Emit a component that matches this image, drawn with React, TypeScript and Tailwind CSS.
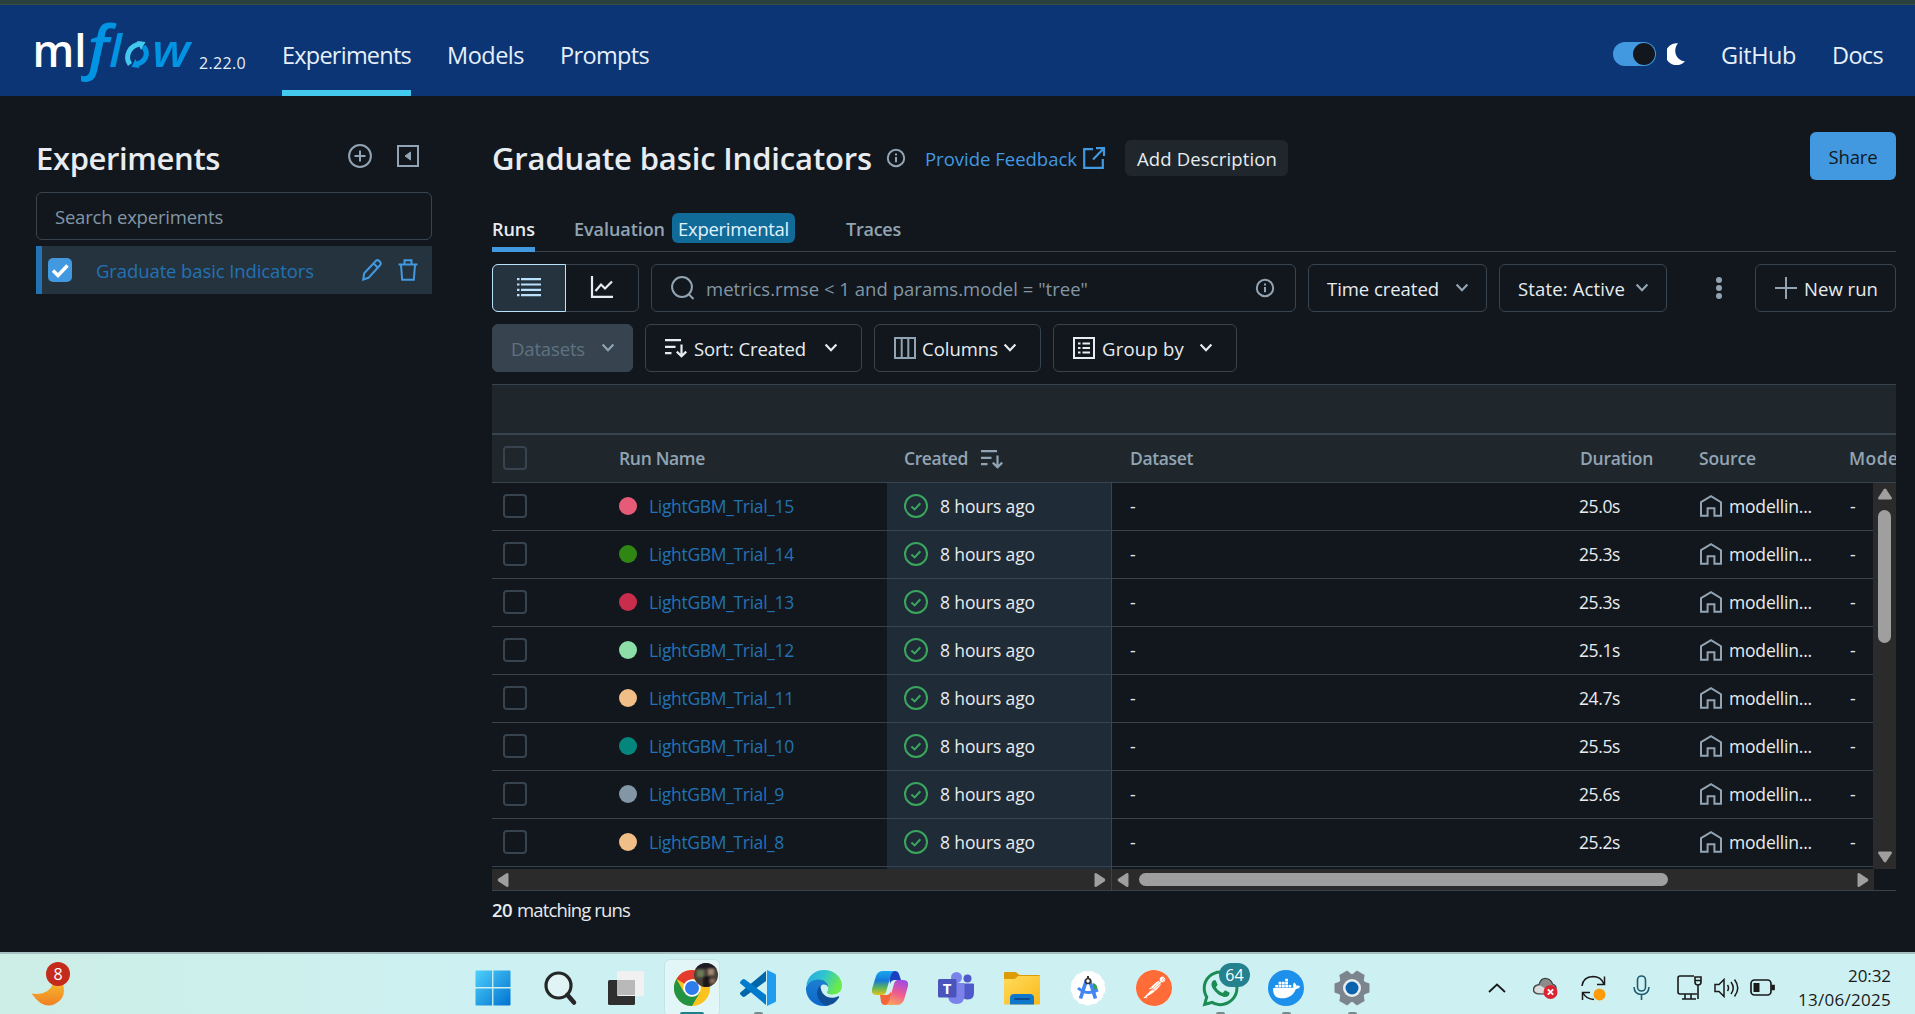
import { useLayoutEffect, useRef, useState } from "react";
import type { ReactNode } from "react";
import { SiDocker, SiPostman } from "react-icons/si";
import { FaWhatsapp } from "react-icons/fa";

/** Single line of text whose letter spacing is adjusted so it fills its slot. */
function Fit({ w, children, className = "" }: { w: number; children: string; className?: string }) {
  const ref = useRef<HTMLSpanElement>(null);
  const [spacing, setSpacing] = useState(0);
  useLayoutEffect(() => {
    const el = ref.current;
    if (!el) return;
    el.style.letterSpacing = "0px";
    const natural = el.getBoundingClientRect().width;
    const next = (w - natural) / children.length;
    el.style.letterSpacing = `${next}px`;
    setSpacing(next);
  }, [w, children]);
  return (
    <span ref={ref} className={`inline-block shrink-0 whitespace-nowrap ${className}`} style={{ letterSpacing: spacing }}>
      {children}
    </span>
  );
}

function Chevron({ className = "" }: { className?: string }) {
  return (
    <svg viewBox="0 0 14 10" className={`h-[10px] w-[14px] shrink-0 ${className}`} fill="none" stroke="currentColor" strokeWidth="2.2">
      <path d="M1.6 1.6 7 7.2l5.4-5.6" />
    </svg>
  );
}

function InfoIcon({ className = "" }: { className?: string }) {
  return (
    <svg viewBox="0 0 20 20" className={`size-5 shrink-0 text-[#92a4b3] ${className}`} fill="none" stroke="currentColor" strokeWidth="2">
      <circle cx="10" cy="10" r="8.2" />
      <path d="M10 9v5.2M10 5.4v2" />
    </svg>
  );
}

function SortIcon({ className = "" }: { className?: string }) {
  return (
    <svg viewBox="0 0 24 20" className={`h-5 w-6 shrink-0 ${className}`} fill="none" stroke="currentColor" strokeWidth="2.2">
      <path d="M1 2.2h16M1 8.8h10.5M1 15.2h6.5M17.5 6.5v12M12.8 13.6l4.7 4.7 4.7-4.7" />
    </svg>
  );
}

function HouseIcon() {
  return (
    <svg viewBox="0 0 22 22" className="size-[22px] shrink-0 text-[#92a4b3]" fill="none" stroke="currentColor" strokeWidth="2">
      <path d="M1 7.2 11 1.2l10 6v13.6h-6.6v-7.6H7.6v7.6H1Z" />
    </svg>
  );
}

function CheckCircle() {
  return (
    <svg viewBox="0 0 24 24" className="size-6 shrink-0 text-[#3ba65e]" fill="none" stroke="currentColor" strokeWidth="2">
      <circle cx="12" cy="12" r="11" />
      <path d="m7.4 12.4 3.2 3 5.8-6.2" />
    </svg>
  );
}

function Button({ className = "", children }: { className?: string; children: ReactNode }) {
  return (
    <button className={`flex h-12 shrink-0 items-center rounded-[6px] border border-[#37444f] text-[18.5px] text-[#e8ecf0] ${className}`}>
      {children}
    </button>
  );
}

function Logo() {
  return (
    <svg viewBox="-36 -16 200 91" className="-ml-9 h-[91px] w-[200px] shrink-0" fontFamily="'Open Sans', sans-serif">
      <text x="-3.5" y="52" fontSize="46" fontWeight="600" fill="#fff" textLength="54" lengthAdjust="spacingAndGlyphs">ml</text>
      <text x="45.500" y="52" fontSize="62" fontWeight="600" fontStyle="italic" fill="#0194e2" textLength="35" lengthAdjust="spacingAndGlyphs">ƒ</text>
      <text x="73" y="52" fontSize="46" fontWeight="600" fontStyle="italic" fill="#0194e2" textLength="13" lengthAdjust="spacingAndGlyphs">l</text>
      <g fill="none" strokeWidth="5">
        <path d="M94 49.5c-6-8 0-20 11-20.500" stroke="#43c9ed" />
        <path d="M107.500 31.500c6 7 2 16-8 18" stroke="#0194e2" />
      </g>
      <path d="m101 26 8.500 1-4.500 8Z" fill="#43c9ed" />
      <path d="m103.500 53-8-1 4-8Z" fill="#0194e2" />
      <text x="116" y="52" fontSize="46" fontWeight="600" fontStyle="italic" fill="#0194e2" textLength="38" lengthAdjust="spacingAndGlyphs">w</text>
    </svg>
  );
}

function Header() {
  return (
    <header className="flex h-[91px] items-start bg-[#0b3574] pl-9 text-[#e6effa]">
      <div className="-mt-[6px] h-[97px]"><Logo /></div>
      <div className="w-[46px] pt-[46px] -ml-px text-base leading-[24px]"><Fit w={47}>2.22.0</Fit></div>
      <nav className="ml-[37px] flex h-full gap-[36px] text-[23.5px] leading-[100px]">
        <div className="h-full border-b-[6px] border-[#43c9ed]"><Fit w={129} className="h-[85px]">Experiments</Fit></div>
        <Fit w={77} className="h-[85px]">Models</Fit>
        <Fit w={89} className="h-[85px]">Prompts</Fit>
      </nav>
      <div className="ml-auto flex items-center pr-8 text-[23.5px] leading-[100px]">
        <div className="-mt-[3px] flex h-6 w-[43px] items-center justify-end rounded-full bg-[#4299e0] pr-[1px]">
          <div className="size-[22px] rounded-full bg-[#11171d]" />
        </div>
        <svg viewBox="0 0 18 22" className="-mt-[2px] mr-[36px] ml-[11px] h-[22px] w-[18px]" fill="#fff">
          <path d="M11 .3A11 11 0 1 0 18 18.200C10.500 18.500 4.500 8.500 11 .3Z" />
        </svg>
        <Fit w={75} className="mr-9">GitHub</Fit>
        <Fit w={51}>Docs</Fit>
      </div>
    </header>
  );
}

function Sidebar() {
  return (
    <aside className="ml-9 w-[396px] shrink-0 pt-9">
      <div className="flex h-12 items-center text-[#92a4b3]">
        <Fit w={184} className="mt-[5px] text-[31px] font-semibold text-[#e8ecf0]">Experiments</Fit>
        <svg viewBox="0 0 24 24" className="ml-32 size-6" fill="none" stroke="currentColor" strokeWidth="2">
          <circle cx="12" cy="12" r="10.900" />
          <path d="M12 6.500v11M6.500 12h11" />
        </svg>
        <svg viewBox="0 0 22 22" className="ml-[25px] size-[22px]" fill="none" stroke="currentColor" strokeWidth="2">
          <path d="M1 1h20v20H1Z" />
          <path d="m8 11 5.500-4v8Z" fill="currentColor" strokeWidth="1" />
        </svg>
      </div>
      <div className="mt-3 flex h-12 items-center rounded-[6px] border border-[#37444f] pt-[2px] pl-[18px] text-[18.5px] text-[#8396a5]">
        <Fit w={168}>Search experiments</Fit>
      </div>
      <div className="mt-[6px] flex h-12 items-center border-l-[6px] border-[#2272b4] bg-[#25333f] pl-[6px] text-[#4299e0]">
        <svg viewBox="0 0 24 24" className="size-6" fill="none">
          <rect width="24" height="24" rx="5" fill="#4299e0" />
          <path d="m5 12.500 5 5 9.500-10" stroke="#fff" strokeWidth="3.500" />
        </svg>
        <Fit w={218} className="mt-[2px] ml-6 text-[18.5px] text-[#2272b4]">Graduate basic Indicators</Fit>
        <svg viewBox="0 0 20 22" className="ml-12 h-[22px] w-5" fill="none" stroke="currentColor" strokeWidth="2">
          <path d="m1.200 20.500 1-6.300L14 1.800q1.500-1.300 3 0l1.200 1.200q1.200 1.500 0 3L6.500 18.800ZM11.800 4.500l4 4.200" />
        </svg>
        <svg viewBox="0 0 20 22" className="ml-4 h-[22px] w-5" fill="none" stroke="currentColor" strokeWidth="2">
          <path d="M.5 5.500h19M6.500 5V1.200h7V5M3 6l1.200 14.800h11.600L17 6" />
        </svg>
      </div>
    </aside>
  );
}

function TitleRow() {
  return (
    <div className="flex h-12 items-center">
      <Fit w={380} className="mt-[5px] text-[31px] font-semibold text-[#e8ecf0]">Graduate basic Indicators</Fit>
      <InfoIcon className="mt-[3px] ml-[14px]" />
      <Fit w={152} className="mt-[6px] ml-[19px] text-[18.5px] text-[#4299e0]">Provide Feedback</Fit>
      <svg viewBox="0 0 24 24" className="mt-[4px] ml-[5px] size-6 text-[#4299e0]" fill="none" stroke="currentColor" strokeWidth="2.200">
        <path d="M11 3.200H2.200v18.600h18.600V13M14 2.200h8V10M22 2.200 11 13.500" />
      </svg>
      <button className="mt-[4px] ml-[19px] flex h-9 w-[163px] items-center rounded-[6px] bg-[#1f272d] pt-[2px] pl-3 text-[18.5px] text-[#e8ecf0]">
        <Fit w={140}>Add Description</Fit>
      </button>
      <button className="ml-auto flex h-12 w-[86px] items-center justify-center rounded-[6px] bg-[#4299e0] pt-px text-[18.5px] text-[#11171d]">
        <Fit w={49}>Share</Fit>
      </button>
    </div>
  );
}

function Tabs() {
  return (
    <div className="mt-[28px] flex h-11 border-b border-[#37444f] text-[18px] leading-[42px] font-semibold text-[#92a4b3]">
      <div className="h-11 border-b-[5px] border-[#4299e0] text-[#e8ecf0]"><Fit w={43} className="h-[38px]">Runs</Fit></div>
      <Fit w={91} className="ml-[39px]">Evaluation</Fit>
      <div className="mt-[5px] ml-[7px] h-[30px] w-[123px] rounded-[6px] bg-[#106b98] pl-[6px] text-[18.500px] leading-[31px] font-normal text-[#e0f2fd]">
        <Fit w={111}>Experimental</Fit>
      </div>
      <Fit w={55} className="ml-[51px]">Traces</Fit>
    </div>
  );
}

function Toolbar() {
  return (
    <>
      <div className="mt-3 flex">
        <div className="flex h-12 w-[147px] rounded-[6px] border border-[#37444f]">
          <div className="-my-px -ml-px flex w-[74px] items-center justify-center rounded-l-[6px] border border-[#bae1fc] bg-[#25333f] text-[#bae1fc]">
            <svg viewBox="0 0 24 20" className="-mt-[3px] h-5 w-6" fill="none" stroke="currentColor" strokeWidth="2.200">
              <path d="M0 2.200h2.500M4 2.200h20M0 7.500h2.500M4 7.500h20M0 12.800h2.500M4 12.800h20M0 18.100h2.500M4 18.100h20" />
            </svg>
          </div>
          <div className="flex flex-1 items-center justify-center text-[#e8ecf0]">
            <svg viewBox="0 0 24 24" className="-mt-[3px] mr-px size-6" fill="none" stroke="currentColor" strokeWidth="2.200">
              <path d="M2 1v20.800h21M5.500 16l5.500-6.500 4 4L22 6.500" />
            </svg>
          </div>
        </div>
        <div className="ml-3 flex h-12 w-[645px] items-center rounded-[6px] border border-[#37444f] pl-[19px] text-[18.5px] text-[#8396a5]">
          <svg viewBox="0 0 24 24" className="size-6 text-[#92a4b3]" fill="none" stroke="currentColor" strokeWidth="2">
            <circle cx="11" cy="11" r="9.900" />
            <path d="m17.500 18 5 5" />
          </svg>
          <Fit w={382} className="mt-[2px] ml-[11px]">{'metrics.rmse < 1 and params.model = "tree"'}</Fit>
          <InfoIcon className="ml-[167px]" />
        </div>
        <Button className="ml-3 w-[179px] pl-[18px]">
          <Fit w={112} className="mt-[2px]">Time created</Fit>
          <Chevron className="ml-4 text-[#92a4b3]" />
        </Button>
        <Button className="ml-3 w-[168px] pl-[18px]">
          <Fit w={107} className="mt-[2px]">State: Active</Fit>
          <Chevron className="ml-[10px] text-[#92a4b3]" />
        </Button>
        <svg viewBox="0 0 6 22" className="mt-[13px] ml-[49px] h-[22px] w-[6px]" fill="#92a4b3">
          <circle cx="3" cy="3" r="3" /><circle cx="3" cy="11" r="3" /><circle cx="3" cy="19" r="3" />
        </svg>
        <Button className="ml-auto w-[141px] pl-[19px]">
          <svg viewBox="0 0 22 22" className="mr-[7px] size-[22px] shrink-0" stroke="#92a4b3" strokeWidth="2"><path d="M11 0v22M0 11h22" /></svg>
          <Fit w={74} className="mt-[2px]">New run</Fit>
        </Button>
      </div>
      <div className="mt-3 flex gap-3">
        <Button className="w-[141px] bg-[#37444f] pl-[18px]">
          <Fit w={74} className="mt-[2px] text-[#5f7281]">Datasets</Fit>
          <Chevron className="ml-4 text-[#92a4b3]" />
        </Button>
        <Button className="w-[217px] pl-[18px]">
          <SortIcon />
          <Fit w={112} className="mt-[2px] ml-[6px]">Sort: Created</Fit>
          <Chevron className="ml-[18px]" />
        </Button>
        <Button className="w-[167px] pl-[19px]">
          <svg viewBox="0 0 22 22" className="mr-[6px] size-[22px] shrink-0" fill="none" stroke="#92a4b3" strokeWidth="2">
            <path d="M1 1h20v20H1ZM7.700 1v20M14.300 1v20" />
          </svg>
          <Fit w={76} className="mt-[2px]">Columns</Fit>
          <Chevron className="ml-[5px]" />
        </Button>
        <Button className="w-[184px] pl-[19px]">
          <svg viewBox="0 0 22 22" className="mr-[7px] size-[22px] shrink-0" fill="none" stroke="currentColor" strokeWidth="2">
            <path d="M1 1h20v20H1ZM5 6.500h2.500M9.500 6.500H17M5 11h2.500M9.500 11H17M5 15.500h2.500M9.500 15.500H17" />
          </svg>
          <Fit w={82} className="mt-[2px]">Group by</Fit>
          <Chevron className="ml-[15px]" />
        </Button>
      </div>
    </>
  );
}

const runs = [
  { name: "LightGBM_Trial_15", w: 145, dot: "bg-[#e65b77]", duration: "25.0s" },
  { name: "LightGBM_Trial_14", w: 145, dot: "bg-[#308613]", duration: "25.3s" },
  { name: "LightGBM_Trial_13", w: 145, dot: "bg-[#c82d4c]", duration: "25.3s" },
  { name: "LightGBM_Trial_12", w: 145, dot: "bg-[#8ddda8]", duration: "25.1s" },
  { name: "LightGBM_Trial_11", w: 145, dot: "bg-[#f2be88]", duration: "24.7s" },
  { name: "LightGBM_Trial_10", w: 145, dot: "bg-[#04867d]", duration: "25.5s" },
  { name: "LightGBM_Trial_9", w: 135, dot: "bg-[#8396a5]", duration: "25.6s" },
  { name: "LightGBM_Trial_8", w: 135, dot: "bg-[#f2be88]", duration: "25.2s" },
];

function Arrow({ className }: { className: string }) {
  return (
    <svg viewBox="0 0 12 16" className={`h-4 w-3 shrink-0 ${className}`} fill="#9f9f9f">
      <path d="M11.500 2v12q-.5 1.500-2 .7L1.200 9.200Q0 8 1.200 6.800L9.500 1.300q1.500-.8 2 .7Z" />
    </svg>
  );
}

function RunsTable() {
  const cell = "flex items-center";
  return (
    <section className="mt-3 border-y border-[#37444f] text-[17.500px]">
      <div className="h-12 bg-[#1f272d]" />
      <div className="flex h-[50px] overflow-hidden border-t-2 border-b border-[#37444f] bg-[#1f272d] font-semibold text-[#92a4b3]">
        <div className={`${cell} w-[127px] pb-px pl-[11px]`}><div className="size-6 rounded-[4px] border-2 border-[#37444f]" /></div>
        <div className={`${cell} w-[285px]`}><Fit w={86}>Run Name</Fit></div>
        <div className={`${cell} w-[226px]`}><Fit w={64}>Created</Fit><SortIcon className="ml-[12px]" /></div>
        <div className={`${cell} w-[450px]`}><Fit w={63}>Dataset</Fit></div>
        <div className={`${cell} w-[119px]`}><Fit w={73}>Duration</Fit></div>
        <div className={`${cell} w-[150px]`}><Fit w={57}>Source</Fit></div>
        <div className={`${cell} w-[47px] overflow-hidden`}><Fit w={64}>Models</Fit></div>
      </div>
      <div className="flex h-[386px]">
        <div className="w-[1381px]">
          {runs.map((r) => (
            <div key={r.name} className="flex h-12 text-[#e8ecf0]">
              <div className={`${cell} w-[395px] border-b border-[#37444f] pb-px pl-[11px]`}>
                <div className="size-6 rounded-[4px] border-2 border-[#37444f]" />
                <div className={`ml-[92px] size-[18px] rounded-full ${r.dot}`} />
                <Fit w={r.w} className="ml-3 text-[#2272b4]">{r.name}</Fit>
              </div>
              <div className={`${cell} w-[225px] border-r border-b border-[#37444f] bg-[#1f2b36] pb-px pl-[17px]`}>
                <CheckCircle />
                <Fit w={95} className="ml-3">8 hours ago</Fit>
              </div>
              <div className={`${cell} w-[761px] border-b border-[#37444f] pb-px pl-[18px]`}>
                <span className="w-[449px]">-</span>
                <Fit w={41} className="mr-20">{r.duration}</Fit>
                <HouseIcon />
                <Fit w={83} className="mr-[38px] ml-[7px]">modellin...</Fit>
                <span>-</span>
              </div>
            </div>
          ))}
          <div className="ml-[395px] h-[2px] w-[225px] border-r border-[#37444f] bg-[#1f2b36]" />
        </div>
        <div className="flex w-[23px] flex-col items-center bg-[#2b2b2b] py-[3px] pb-1">
          <Arrow className="rotate-90" />
          <div className="mt-2 h-[133px] w-[13px] rounded-full bg-[#9f9f9f]" />
          <Arrow className="mt-auto -rotate-90" />
        </div>
      </div>
      <div className="flex h-[21px]">
        <div className="flex w-[620px] items-center justify-between border-r border-[#37444f] bg-[#2b2b2b] pr-[5px] pl-[5px]">
          <Arrow className="" />
          <Arrow className="rotate-180" />
        </div>
        <div className="flex w-[762px] items-center bg-[#2b2b2b] pr-[5px] pl-[5px]">
          <Arrow className="" />
          <div className="ml-[10px] h-[13px] w-[529px] rounded-full bg-[#9f9f9f]" />
          <Arrow className="ml-auto rotate-180" />
        </div>
      </div>
    </section>
  );
}

function WindowsIcon() {
  return (
    <svg viewBox="0 0 36 36" className="size-9">
      <defs><linearGradient id="win" x1="0" y1="0" x2="1" y2="1"><stop stopColor="#4fd0fb" /><stop offset="1" stopColor="#0072d0" /></linearGradient></defs>
      <path fill="url(#win)" d="M.5 1.500q0-1 1-1h15.600v16.600H.5ZM18.400.5H34.500q1 0 1 1v15.600H18.400ZM.5 18.400h16.600v17.100H1.500q-1 0-1-1ZM18.400 18.400h17.100v16.100q0 1-1 1H18.400Z" />
    </svg>
  );
}

function SearchIcon() {
  return (
    <svg viewBox="0 0 36 36" className="size-9" fill="none" stroke="#262626">
      <circle cx="16.500" cy="15.500" r="12.500" strokeWidth="3.200" fill="#e0f4f6" />
      <path d="m25.500 25 6.500 7.500" strokeWidth="4.500" strokeLinecap="round" />
    </svg>
  );
}

function TaskViewIcon() {
  return (
    <svg viewBox="0 0 36 36" className="size-9">
      <rect x="0" y="10" width="27" height="25" rx="1.500" fill="#2f2f2f" />
      <rect x="9" y="1" width="27" height="25" rx="1.500" fill="#f1f1f1" />
      <path d="M9 10h18v15H9Z" fill="#b9b9b9" />
    </svg>
  );
}

function ChromeIcon() {
  return (
    <div className="relative flex h-[58px] w-14 items-center justify-center rounded-[6px] border border-[#c6e4e6] bg-[#e2f6f7]">
      <svg viewBox="0 0 36 36" className="size-9">
        <circle cx="18" cy="18" r="18" fill="#fcc31e" />
        <path d="M18 18 2.400 9A18 18 0 0 1 33.600 9H18Z" fill="#e33b2e" />
        <path d="M2.400 9A18 18 0 0 0 18 36l7.800-13.500L18 18 10.200 22.500Z" fill="#229342" />
        <circle cx="18" cy="18" r="8.800" fill="#fff" />
        <circle cx="18" cy="18" r="7" fill="#2f7ced" />
      </svg>
      <svg viewBox="0 0 24 24" className="absolute top-[3px] right-[1px] size-6">
        <defs>
          <clipPath id="avatar"><circle cx="12" cy="12" r="12" /></clipPath>
          <filter id="soft"><feGaussianBlur stdDeviation="1.200" /></filter>
        </defs>
        <g clipPath="url(#avatar)">
          <path fill="#4a4038" d="M0 0h24v24H0Z" />
          <g filter="url(#soft)">
            <path fill="#1c1c24" d="M0-2h24v8H0Z" />
            <path fill="#6d7a58" d="M3 7h7v7H3Z" />
            <path fill="#a58a74" d="M14 6h6v6h-6Z" />
            <path fill="#1d1712" d="M9 13h7v13H9Z" />
            <path fill="#8a6e5c" d="M16 16h5v4h-5Z" />
          </g>
        </g>
      </svg>
    </div>
  );
}

function VsCodeIcon() {
  return (
    <svg viewBox="0 0 36 36" className="size-9">
      <path d="M26 1v10L5 26.500q-1.500 1-2.800-.2L.6 24.800q-1.200-1.300 0-2.600Z" fill="#0065a9" />
      <path d="M26 35V25L5 9.500q-1.500-1-2.800.2L.6 11.200q-1.200 1.300 0 2.600Z" fill="#007acc" />
      <path d="M27 0l8 3.800q1 .5 1 1.700v25q0 1.200-1 1.700L27 36Z" fill="#1f9cf0" />
    </svg>
  );
}

function EdgeIcon() {
  return (
    <svg viewBox="0 0 36 36" className="size-9">
      <defs>
        <linearGradient id="edgeTop" x1="0" y1="0" x2="1" y2=".4"><stop stopColor="#2aa6e0" /><stop offset=".5" stopColor="#2fc4d0" /><stop offset="1" stopColor="#6bea4c" /></linearGradient>
        <linearGradient id="edgeLow" x1="0" y1="0" x2="0" y2="1"><stop stopColor="#1b7fd0" /><stop offset="1" stopColor="#0c67cc" /></linearGradient>
      </defs>
      <path d="M.2 16C1.500 6 9 0 18 0c10.500 0 18 7.500 18 15.500 0 6-4.500 9-9.500 9-4 0-6-1.200-5.500-2.500 4-5-1-10.500-8-10.500C7 11.500 2 13.500.2 16Z" fill="url(#edgeTop)" />
      <path d="M0 17.500C2 12 7.500 9.500 12.500 9.500c5.500 0 9.500 3.500 9.800 8-2-5-9-4-8.800 3 .2 8 6 14 10.500 14.500-2 .8-4 1-6 1C7 36-.8 27 0 17.500Z" fill="url(#edgeLow)" />
      <path d="M14.500 15.500c-6 5-4 15.500 5 20 6 .2 11-3.500 13.500-8 .5-1-.3-1.500-1.200-1-8 3.500-17.300-.5-17.300-11Z" fill="#104f97" />
    </svg>
  );
}

function CopilotIcon() {
  return (
    <svg viewBox="0 0 36 36" className="size-9">
      <defs>
        <linearGradient id="cpA" x1="0" y1="0" x2="0" y2="1"><stop stopColor="#18a7f2" /><stop offset=".4" stopColor="#1579d8" /><stop offset=".7" stopColor="#5fb55a" /><stop offset="1" stopColor="#e3c11a" /></linearGradient>
        <linearGradient id="cpB" x1=".6" y1="0" x2=".3" y2="1"><stop stopColor="#a34be0" /><stop offset=".5" stopColor="#ee5a90" /><stop offset="1" stopColor="#fba45d" /></linearGradient>
      </defs>
      <path d="M17 1h6q3 0 4 3l2 6h-6q-4 0-5 4Z" fill="#1b3fc0" />
      <path d="M19 35h-6q-3 0-4-3l-1-7h6q4 0 5-4Z" fill="#f5653a" />
      <path d="M11 1h12q-3 .5-4 4l-5 17q-1 3-4 3H5q-6 0-5-6L4 6q2-5 7-5Z" fill="url(#cpA)" />
      <path d="M25 35H13q3-.5 4-4l5-17q1-4 4-4h5q6 0 5 6l-4 14q-2 5-7 5Z" fill="url(#cpB)" />
    </svg>
  );
}

function TeamsIcon() {
  return (
    <svg viewBox="0 0 36 36" className="size-9">
      <circle cx="29.500" cy="8.500" r="4" fill="#5059c9" />
      <circle cx="18.500" cy="7.500" r="5.500" fill="#7b83eb" />
      <path d="M25 13.500h10q1 0 1 1v8q0 7-6 7t-7-6Z" fill="#5059c9" />
      <path d="M10 13h15q1.500 0 1.500 1.500V25q0 9-8 9t-8.500-8Z" fill="#7b83eb" />
      <rect x="0" y="9" width="18.500" height="18.500" rx="1.500" fill="#4b53bc" />
      <text x="9.200" y="23.500" fontSize="15" fontWeight="700" textAnchor="middle" fill="#fff" fontFamily="'Open Sans', sans-serif">T</text>
    </svg>
  );
}

function FolderIcon() {
  return (
    <svg viewBox="0 0 36 36" className="size-9">
      <defs><linearGradient id="fold" x1="0" y1="0" x2="1" y2="1"><stop stopColor="#ffdb5c" /><stop offset="1" stopColor="#fbb91a" /></linearGradient></defs>
      <path d="M0 3q0-1 1-1h10q1 0 2 1l2.500 2H35q1 0 1 1v8H0Z" fill="#dd9b06" />
      <path d="M0 9h10q1 0 2-1l2-2h22v27.500q0 1-1 1H1q-1 0-1-1Z" fill="url(#fold)" />
      <path d="M6 34.500V28q0-4 4-4h16q4 0 4 4v6.500Z" fill="#0f78cc" />
      <path d="M11 29h14" stroke="#0a4c93" strokeWidth="1.800" strokeLinecap="round" />
    </svg>
  );
}

function AndroidStudioIcon() {
  return (
    <svg viewBox="0 0 36 36" className="size-9">
      <circle cx="18" cy="18" r="16.800" fill="#fff" stroke="#fff" strokeWidth="1.200" strokeDasharray="5 3" />
      <path d="M23 13q5 1 4.500 8H23Z" fill="#30a352" />
      <path d="m16.500 10-6 18.500M19.500 10l6 18.500" stroke="#4285f4" strokeWidth="3.600" fill="none" />
      <path d="M8 18q9 8 20 2" stroke="#4285f4" strokeWidth="3" fill="none" />
      <path d="M18 6v5" stroke="#333" strokeWidth="2" />
      <circle cx="18" cy="11" r="2.500" fill="#fff" stroke="#333" strokeWidth="1.700" />
    </svg>
  );
}

function SettingsIcon() {
  return (
    <svg viewBox="0 0 36 36" className="size-9">
      <g fill="#7c858d">
        <circle cx="18" cy="18" r="14" />
        {[30, 90, 150, 210, 270, 330].map((a) => (
          <path key={a} d="m11.500 6 2-5.500h9l2 5.500v5h-13Z" transform={`rotate(${a} 18 18)`} strokeLinejoin="round" />
        ))}
      </g>
      <circle cx="18" cy="18" r="9" fill="#e9eef1" />
      <circle cx="18" cy="18" r="6.500" fill="#0c63ad" />
    </svg>
  );
}

function Cell({ children, mark }: { children: ReactNode; mark?: string }) {
  return (
    <div className="relative flex h-[60px] w-[66px] shrink-0 items-center justify-center pt-2">
      {children}
      {mark && <span className={`absolute bottom-0 h-[2px] rounded-t-full ${mark}`} />}
    </div>
  );
}

function Taskbar() {
  const dot = "w-[9px] bg-[#76898b]";
  return (
    <footer className="flex h-[62px] overflow-hidden border-t-2 border-[#a7bfc1] bg-[#cdf1f2]">
      <div className="relative w-[460px] shrink-0 bg-linear-to-r from-[#cdeee6] to-[#cdf1f2]">
        <svg viewBox="0 0 34 22" className="absolute top-[30px] left-[31px] h-[22px] w-[34px]">
          <defs><linearGradient id="moon" x1="0" y1="0" x2="0" y2="1"><stop stopColor="#f6b42c" /><stop offset="1" stopColor="#f08023" /></linearGradient></defs>
          <path d="M.5 9.500Q17 12 22 0h10q4 14-8 20T.5 9.500Z" fill="url(#moon)" />
        </svg>
        <span className="absolute top-2 left-[46px] flex size-6 items-center justify-center rounded-full bg-[#c42b1c] text-base leading-none text-white">8</span>
      </div>
      <Cell><WindowsIcon /></Cell>
      <div className="w-px" />
      <Cell><SearchIcon /></Cell>
      <Cell><TaskViewIcon /></Cell>
      <Cell mark="w-6 bg-[#1f7f8b]"><ChromeIcon /></Cell>
      <Cell mark={dot}><VsCodeIcon /></Cell>
      <Cell><EdgeIcon /></Cell>
      <Cell><CopilotIcon /></Cell>
      <Cell><TeamsIcon /></Cell>
      <Cell><FolderIcon /></Cell>
      <Cell><AndroidStudioIcon /></Cell>
      <Cell>
        <div className="rounded-full bg-white"><SiPostman className="size-9 text-[#ff6c37]" /></div>
      </Cell>
      <Cell mark={dot}>
        <FaWhatsapp className="size-[41px] shrink-0 text-[#1c8c55]" />
        <span className="absolute top-[9px] left-[32px] flex h-6 w-[31px] items-center justify-center rounded-full bg-[#23828e] text-base leading-none text-white">64</span>
      </Cell>
      <Cell mark={dot}>
        <div className="flex size-9 items-center justify-center rounded-full bg-[#1d90ec]"><SiDocker className="size-[27px] text-white" /></div>
      </Cell>
      <Cell mark={dot}><SettingsIcon /></Cell>
      <div className="ml-auto flex h-[60px] items-center pt-[7px] pr-6 text-[#1a1a1a]">
        <svg viewBox="0 0 18 10" className="mr-[27px] h-[10px] w-[18px]" fill="none" stroke="currentColor" strokeWidth="1.800"><path d="m1 9 8-7.500L17 9" /></svg>
        <svg viewBox="0 0 25 22" className="mr-[23px] h-[22px] w-[25px]">
          <path d="M5 17q-5-1-4.500-5T6 7.500Q8 1 13 1.500T19.500 7q4 1 3.500 5t-5 5Z" fill="#8c8c8c" stroke="#3c3c3c" strokeWidth="1.200" />
          <path d="M5 16q-4-1-3.500-4T7 8.500L17 14v2.500Z" fill="#dcdcdc" />
          <circle cx="17.500" cy="15" r="7" fill="#dc2334" />
          <path d="m14.800 12.300 5.400 5.400m0-5.400-5.400 5.400" stroke="#fff" strokeWidth="1.800" />
        </svg>
        <svg viewBox="0 0 25 26" className="mr-[27px] h-[26px] w-[25px]" fill="none" stroke="currentColor" strokeWidth="1.500">
          <path d="M1 11Q2 2 12 1.500q8 0 11 7.500M23.500 1.500v8H16M1.500 25v-7.500H9M2 18q3 6 11 6.500" />
          <circle cx="18.500" cy="19.500" r="6" fill="#ff9b0a" stroke="none" />
        </svg>
        <svg viewBox="0 0 17 25" className="mr-[27px] h-[25px] w-[17px]" fill="none" stroke="#1d5b70" strokeWidth="1.600">
          <rect x="4.500" y="1" width="8" height="15" rx="4" /><path d="M1 12q.5 7.500 7.500 7.500T16 12M8.500 19.500V25" />
        </svg>
        <svg viewBox="0 0 25 25" className="mr-3 h-[25px] w-[25px]" fill="none" stroke="currentColor" strokeWidth="1.600">
          <path d="M17 1H3Q1 1 1 3v14q0 2 2 2h17M8 19.500v4M14 19.500v4M5 24h14M18 2h6v5q0 3-3 3t-3-3ZM21 10v14M18 5.500h6" />
        </svg>
        <svg viewBox="0 0 25 22" className="mr-[11px] h-[22px] w-[25px]" fill="none" stroke="currentColor" strokeWidth="1.500">
          <path d="M1 7.500h4L10 2.500v17l-5-5H1ZM13.500 8q2 3 0 6M17 5q4.500 6 0 12M20.500 2.500q6.500 8.500 0 17" />
        </svg>
        <svg viewBox="0 0 25 17" className="mr-[23px] h-[17px] w-[25px]" fill="none" stroke="currentColor" strokeWidth="1.700">
          <rect x="1" y="1" width="20" height="15" rx="3.500" /><path d="M3.500 4h6v9h-6Z" fill="currentColor" stroke="none" /><path d="M21.500 6.500H24v4h-2.500" fill="currentColor" />
        </svg>
        <div className="flex flex-col items-end text-[17px] leading-6">
          <Fit w={43}>20:32</Fit>
          <Fit w={93}>13/06/2025</Fit>
        </div>
      </div>
    </footer>
  );
}

export default function App() {
  return (
    <div className="flex h-[1014px] w-[1915px] flex-col overflow-hidden bg-[#11171d] font-['Open_Sans',sans-serif]">
      <div className="h-[5px] shrink-0 border-b border-[#3b4a45] bg-[#29423f]" />
      <Header />
      <div className="flex h-[856px] shrink-0">
        <Sidebar />
        <main className="ml-[60px] w-[1404px] shrink-0 pt-9">
          <TitleRow />
          <Tabs />
          <Toolbar />
          <RunsTable />
          <div className="mt-1 flex text-[18.500px] leading-[30px] text-[#e8ecf0]">
            <Fit w={20} className="mr-[5px] font-semibold">20</Fit>
            <Fit w={113}>matching runs</Fit>
          </div>
        </main>
      </div>
      <Taskbar />
    </div>
  );
}
